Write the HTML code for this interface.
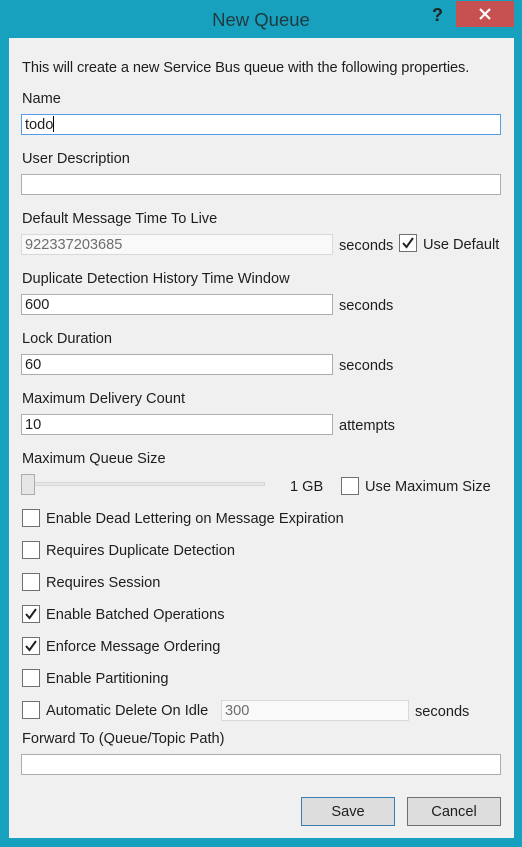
<!DOCTYPE html>
<html><head><meta charset="utf-8"><style>
*{margin:0;padding:0;box-sizing:border-box}
body{width:522px;height:847px;background:#18a1be;font-family:"Liberation Sans",sans-serif;font-size:14.6px;color:#1e1e1e;position:relative;overflow:hidden}
.a{position:absolute;white-space:nowrap;line-height:18px}
.c{position:absolute;left:9px;top:38px;width:505px;height:800px;background:#f0f0f0}
.in{position:absolute;height:21px;background:#fff;border:1px solid #abadb3;line-height:20px;padding-left:3px;font-size:14.6px}
.dis{background:#f9f9f9;border-color:#d9d9d9;color:#6d6d6d}
.cb{position:absolute;width:18px;height:18px;border:1px solid #707070;background:#fff}
.cb svg{position:absolute;left:1px;top:1px}
.btn{position:absolute;height:29px;border:1px solid #707070;background:#dddddd;text-align:center;line-height:28px;font-size:14.6px}
</style></head><body>
<div class="a" style="left:0;width:522px;top:9px;text-align:center;font-size:18.5px;line-height:22px;color:#1e3a40">New Queue</div>
<div class="a" style="left:432px;top:5px;font-size:18px;font-weight:bold;color:#222;line-height:20px">?</div>
<div style="position:absolute;left:456px;top:1px;width:58px;height:26px;background:#c75050"><svg width="58" height="26"><path d="M24 8 L34 18 M34 8 L24 18" stroke="#fff" stroke-width="2.2"/></svg></div>
<div class="c"></div>

<div class="a" style="left:22px;top:59px;letter-spacing:-0.1px">This will create a new Service Bus queue with the following properties.</div>
<div class="a" style="left:22px;top:90px">Name</div>
<div class="in" style="left:21px;top:114px;width:480px;border-color:#569de5">todo<span style="display:inline-block;width:1px;height:16px;background:#000;vertical-align:-3px"></span></div>
<div class="a" style="left:22px;top:150px">User Description</div>
<div class="in" style="left:21px;top:174px;width:480px"></div>
<div class="a" style="left:22px;top:210px">Default Message Time To Live</div>
<div class="in dis" style="left:21px;top:234px;width:312px">922337203685</div>
<div class="a" style="left:339px;top:237px">seconds</div>
<div class="cb" style="left:399px;top:234px"><svg width="14" height="14"><path d="M2 7 L5.5 11 L12 2" stroke="#222" stroke-width="2" fill="none"/></svg></div>
<div class="a" style="left:423px;top:236px">Use Default</div>
<div class="a" style="left:22px;top:270px">Duplicate Detection History Time Window</div>
<div class="in" style="left:21px;top:294px;width:312px">600</div>
<div class="a" style="left:339px;top:297px">seconds</div>
<div class="a" style="left:22px;top:330px">Lock Duration</div>
<div class="in" style="left:21px;top:354px;width:312px">60</div>
<div class="a" style="left:339px;top:357px">seconds</div>
<div class="a" style="left:22px;top:390px">Maximum Delivery Count</div>
<div class="in" style="left:21px;top:414px;width:312px">10</div>
<div class="a" style="left:339px;top:417px">attempts</div>
<div class="a" style="left:22px;top:450px">Maximum Queue Size</div>
<div style="position:absolute;left:23px;top:482px;width:242px;height:4px;background:#e7e7e7;border:1px solid #d6d6d6"></div>
<div style="position:absolute;left:21px;top:474px;width:14px;height:21px;background:#e6e6e6;border:1px solid #acacac"></div>
<div class="a" style="left:290px;top:478px">1 GB</div>
<div class="cb" style="left:341px;top:477px"></div>
<div class="a" style="left:365px;top:478px">Use Maximum Size</div>

<div class="cb" style="left:22px;top:509px"></div>
<div class="a" style="left:46px;top:510px">Enable Dead Lettering on Message Expiration</div>
<div class="cb" style="left:22px;top:541px"></div>
<div class="a" style="left:46px;top:542px">Requires Duplicate Detection</div>
<div class="cb" style="left:22px;top:573px"></div>
<div class="a" style="left:46px;top:574px">Requires Session</div>
<div class="cb" style="left:22px;top:605px"><svg width="14" height="14"><path d="M2 7 L5.5 11 L12 2" stroke="#222" stroke-width="2" fill="none"/></svg></div>
<div class="a" style="left:46px;top:606px">Enable Batched Operations</div>
<div class="cb" style="left:22px;top:637px"><svg width="14" height="14"><path d="M2 7 L5.5 11 L12 2" stroke="#222" stroke-width="2" fill="none"/></svg></div>
<div class="a" style="left:46px;top:638px">Enforce Message Ordering</div>
<div class="cb" style="left:22px;top:669px"></div>
<div class="a" style="left:46px;top:670px">Enable Partitioning</div>
<div class="cb" style="left:22px;top:701px"></div>
<div class="a" style="left:46px;top:702px">Automatic Delete On Idle</div>
<div class="in dis" style="left:221px;top:700px;width:188px">300</div>
<div class="a" style="left:415px;top:703px">seconds</div>
<div class="a" style="left:22px;top:730px">Forward To (Queue/Topic Path)</div>
<div class="in" style="left:21px;top:754px;width:480px"></div>
<div class="btn" style="left:301px;top:797px;width:94px;border-color:#3c7fb1">Save</div>
<div class="btn" style="left:407px;top:797px;width:94px">Cancel</div>
</body></html>
